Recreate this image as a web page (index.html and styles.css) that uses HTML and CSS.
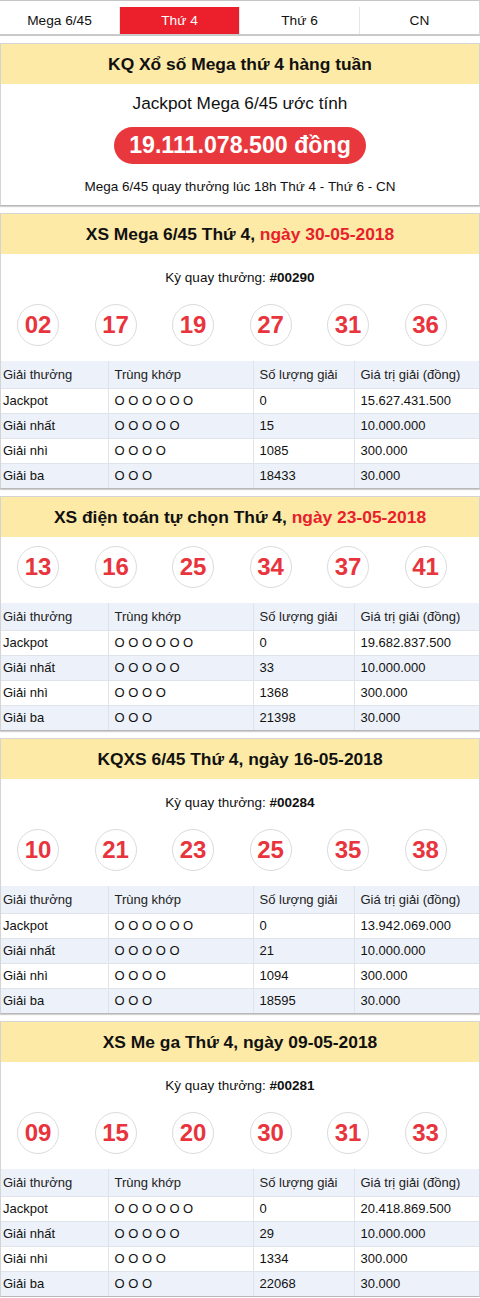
FILE: index.html
```html
<!DOCTYPE html>
<html lang="vi">
<head>
<meta charset="utf-8">
<title>KQ Xổ số Mega thứ 4</title>
<link rel="stylesheet" href="styles.css">
</head>
<body>
<nav class="nav">
  <a class="tab">Mega 6/45</a>
  <a class="tab active">Thứ 4</a>
  <a class="tab">Thứ 6</a>
  <a class="tab">CN</a>
</nav>

<section class="box intro">
  <h2 class="title">KQ Xổ số Mega thứ 4 hàng tuần</h2>
  <p class="jp-label">Jackpot Mega 6/45 ước tính</p>
  <div class="pill-wrap"><span class="pill">19.111.078.500 đồng</span></div>
  <p class="sched">Mega 6/45 quay thưởng lúc 18h Thứ 4 - Thứ 6 - CN</p>
</section>

<section class="box">
  <h2 class="title">XS Mega 6/45 Thứ 4, <span class="date">ngày 30-05-2018</span></h2>
  <p class="ky">Kỳ quay thưởng: <b>#00290</b></p>
  <div class="balls"><span class="ball">02</span><span class="ball">17</span><span class="ball">19</span><span class="ball">27</span><span class="ball">31</span><span class="ball">36</span></div>
  <table class="prize">
    <colgroup><col class="c1"><col class="c2"><col class="c3"><col class="c4"></colgroup>
    <tr class="head"><td>Giải thưởng</td><td>Trùng khớp</td><td>Số lượng giải</td><td>Giá trị giải (đồng)</td></tr>
    <tr><td>Jackpot</td><td>O O O O O O</td><td>0</td><td>15.627.431.500</td></tr>
    <tr class="alt"><td>Giải nhất</td><td>O O O O O</td><td>15</td><td>10.000.000</td></tr>
    <tr><td>Giải nhì</td><td>O O O O</td><td>1085</td><td>300.000</td></tr>
    <tr class="alt"><td>Giải ba</td><td>O O O</td><td>18433</td><td>30.000</td></tr>
  </table>
</section>

<section class="box noky">
  <h2 class="title">XS điện toán tự chọn Thứ 4, <span class="date">ngày 23-05-2018</span></h2>
  <div class="balls"><span class="ball">13</span><span class="ball">16</span><span class="ball">25</span><span class="ball">34</span><span class="ball">37</span><span class="ball">41</span></div>
  <table class="prize">
    <colgroup><col class="c1"><col class="c2"><col class="c3"><col class="c4"></colgroup>
    <tr class="head"><td>Giải thưởng</td><td>Trùng khớp</td><td>Số lượng giải</td><td>Giá trị giải (đồng)</td></tr>
    <tr><td>Jackpot</td><td>O O O O O O</td><td>0</td><td>19.682.837.500</td></tr>
    <tr class="alt"><td>Giải nhất</td><td>O O O O O</td><td>33</td><td>10.000.000</td></tr>
    <tr><td>Giải nhì</td><td>O O O O</td><td>1368</td><td>300.000</td></tr>
    <tr class="alt"><td>Giải ba</td><td>O O O</td><td>21398</td><td>30.000</td></tr>
  </table>
</section>

<section class="box">
  <h2 class="title">KQXS 6/45 Thứ 4, ngày 16-05-2018</h2>
  <p class="ky">Kỳ quay thưởng: <b>#00284</b></p>
  <div class="balls"><span class="ball">10</span><span class="ball">21</span><span class="ball">23</span><span class="ball">25</span><span class="ball">35</span><span class="ball">38</span></div>
  <table class="prize">
    <colgroup><col class="c1"><col class="c2"><col class="c3"><col class="c4"></colgroup>
    <tr class="head"><td>Giải thưởng</td><td>Trùng khớp</td><td>Số lượng giải</td><td>Giá trị giải (đồng)</td></tr>
    <tr><td>Jackpot</td><td>O O O O O O</td><td>0</td><td>13.942.069.000</td></tr>
    <tr class="alt"><td>Giải nhất</td><td>O O O O O</td><td>21</td><td>10.000.000</td></tr>
    <tr><td>Giải nhì</td><td>O O O O</td><td>1094</td><td>300.000</td></tr>
    <tr class="alt"><td>Giải ba</td><td>O O O</td><td>18595</td><td>30.000</td></tr>
  </table>
</section>

<section class="box">
  <h2 class="title">XS Me ga Thứ 4, ngày 09-05-2018</h2>
  <p class="ky">Kỳ quay thưởng: <b>#00281</b></p>
  <div class="balls"><span class="ball">09</span><span class="ball">15</span><span class="ball">20</span><span class="ball">30</span><span class="ball">31</span><span class="ball">33</span></div>
  <table class="prize">
    <colgroup><col class="c1"><col class="c2"><col class="c3"><col class="c4"></colgroup>
    <tr class="head"><td>Giải thưởng</td><td>Trùng khớp</td><td>Số lượng giải</td><td>Giá trị giải (đồng)</td></tr>
    <tr><td>Jackpot</td><td>O O O O O O</td><td>0</td><td>20.418.869.500</td></tr>
    <tr class="alt"><td>Giải nhất</td><td>O O O O O</td><td>29</td><td>10.000.000</td></tr>
    <tr><td>Giải nhì</td><td>O O O O</td><td>1334</td><td>300.000</td></tr>
    <tr class="alt"><td>Giải ba</td><td>O O O</td><td>22068</td><td>30.000</td></tr>
  </table>
</section>
</body>
</html>
```

FILE: styles.css
```css
* { box-sizing: border-box; }
html, body { margin: 0; padding: 0; background: #fff; }
body {
  font-family: "Liberation Sans", Arial, sans-serif;
  color: #111;
  width: 480px;
}

.nav {
  display: flex;
  border-top: 1px solid #c6c6c6;
  margin-top: 0;
  padding-top: 6px;
  border-bottom: 2px solid #c9c9c9;
  border-right: 1px solid #d6d6d6;
}
.tab {
  flex: 1;
  height: 27px;
  line-height: 27px;
  text-align: center;
  font-size: 13.7px;
  color: #111;
  border-left: 1px solid #e6e6e6;
}
.tab:first-child { border-left: none; }
.tab.active { background: #ec1f2d; color: #fff; }

.box {
  margin-top: 7px;
  border: 1px solid #d4d4d4;
  border-bottom: 1px solid #b8b8b8;
  box-shadow: 0 1px 1px rgba(0,0,0,0.18);
}

.title {
  margin: 0;
  height: 40px;
  line-height: 40px;
  background: #fdeaa6;
  text-align: center;
  font-size: 17.4px;
  font-weight: bold;
  color: #111;
}
.date { color: #e8202c; }

.jp-label {
  margin: 9px 0 0;
  text-align: center;
  font-size: 17.2px;
  line-height: 20px;
}
.pill-wrap { text-align: center; margin-top: 14px; }
.pill {
  display: inline-block;
  height: 37px;
  line-height: 37px;
  padding: 0 15px;
  border-radius: 19px;
  background: #e8383e;
  color: #fff;
  font-size: 23.2px;
  font-weight: bold;
}
.sched {
  margin: 14px 0 0;
  padding-bottom: 9px;
  text-align: center;
  font-size: 13.5px;
  line-height: 18px;
}

.ky {
  margin: 15px 0 0;
  text-align: center;
  font-size: 13.5px;
  line-height: 18px;
}
.balls {
  display: flex;
  gap: 35.5px;
  padding-left: 16px;
  margin-top: 17px;
}
.noky .balls { margin-top: 9px; }
.ball {
  width: 42px;
  height: 42px;
  border: 1.5px solid #dcdcdc;
  border-radius: 50%;
  display: flex;
  align-items: center;
  justify-content: center;
  color: #e8343c;
  font-size: 24px;
  font-weight: bold;
}

.prize {
  margin-top: 15px;
  width: 100%;
  border-collapse: collapse;
  table-layout: fixed;
  font-size: 13px;
}
.c1 { width: 107px; }
.c2 { width: 145px; }
.c3 { width: 101px; }
.c4 { width: auto; }
.prize td {
  height: 25px;
  padding: 0 6px;
  border: 1px solid #dfe3ea;
  white-space: nowrap;
}
.prize tr td:first-child { padding-left: 2px; border-left: none; }
.prize tr td:last-child { border-right: none; }
.prize tr:last-child td { border-bottom: none; }
.prize tr.head td { height: 27px; background: #edf1f9; color: #222; border-top: none; }
.prize tr.alt td { background: #edf1f9; }
```
